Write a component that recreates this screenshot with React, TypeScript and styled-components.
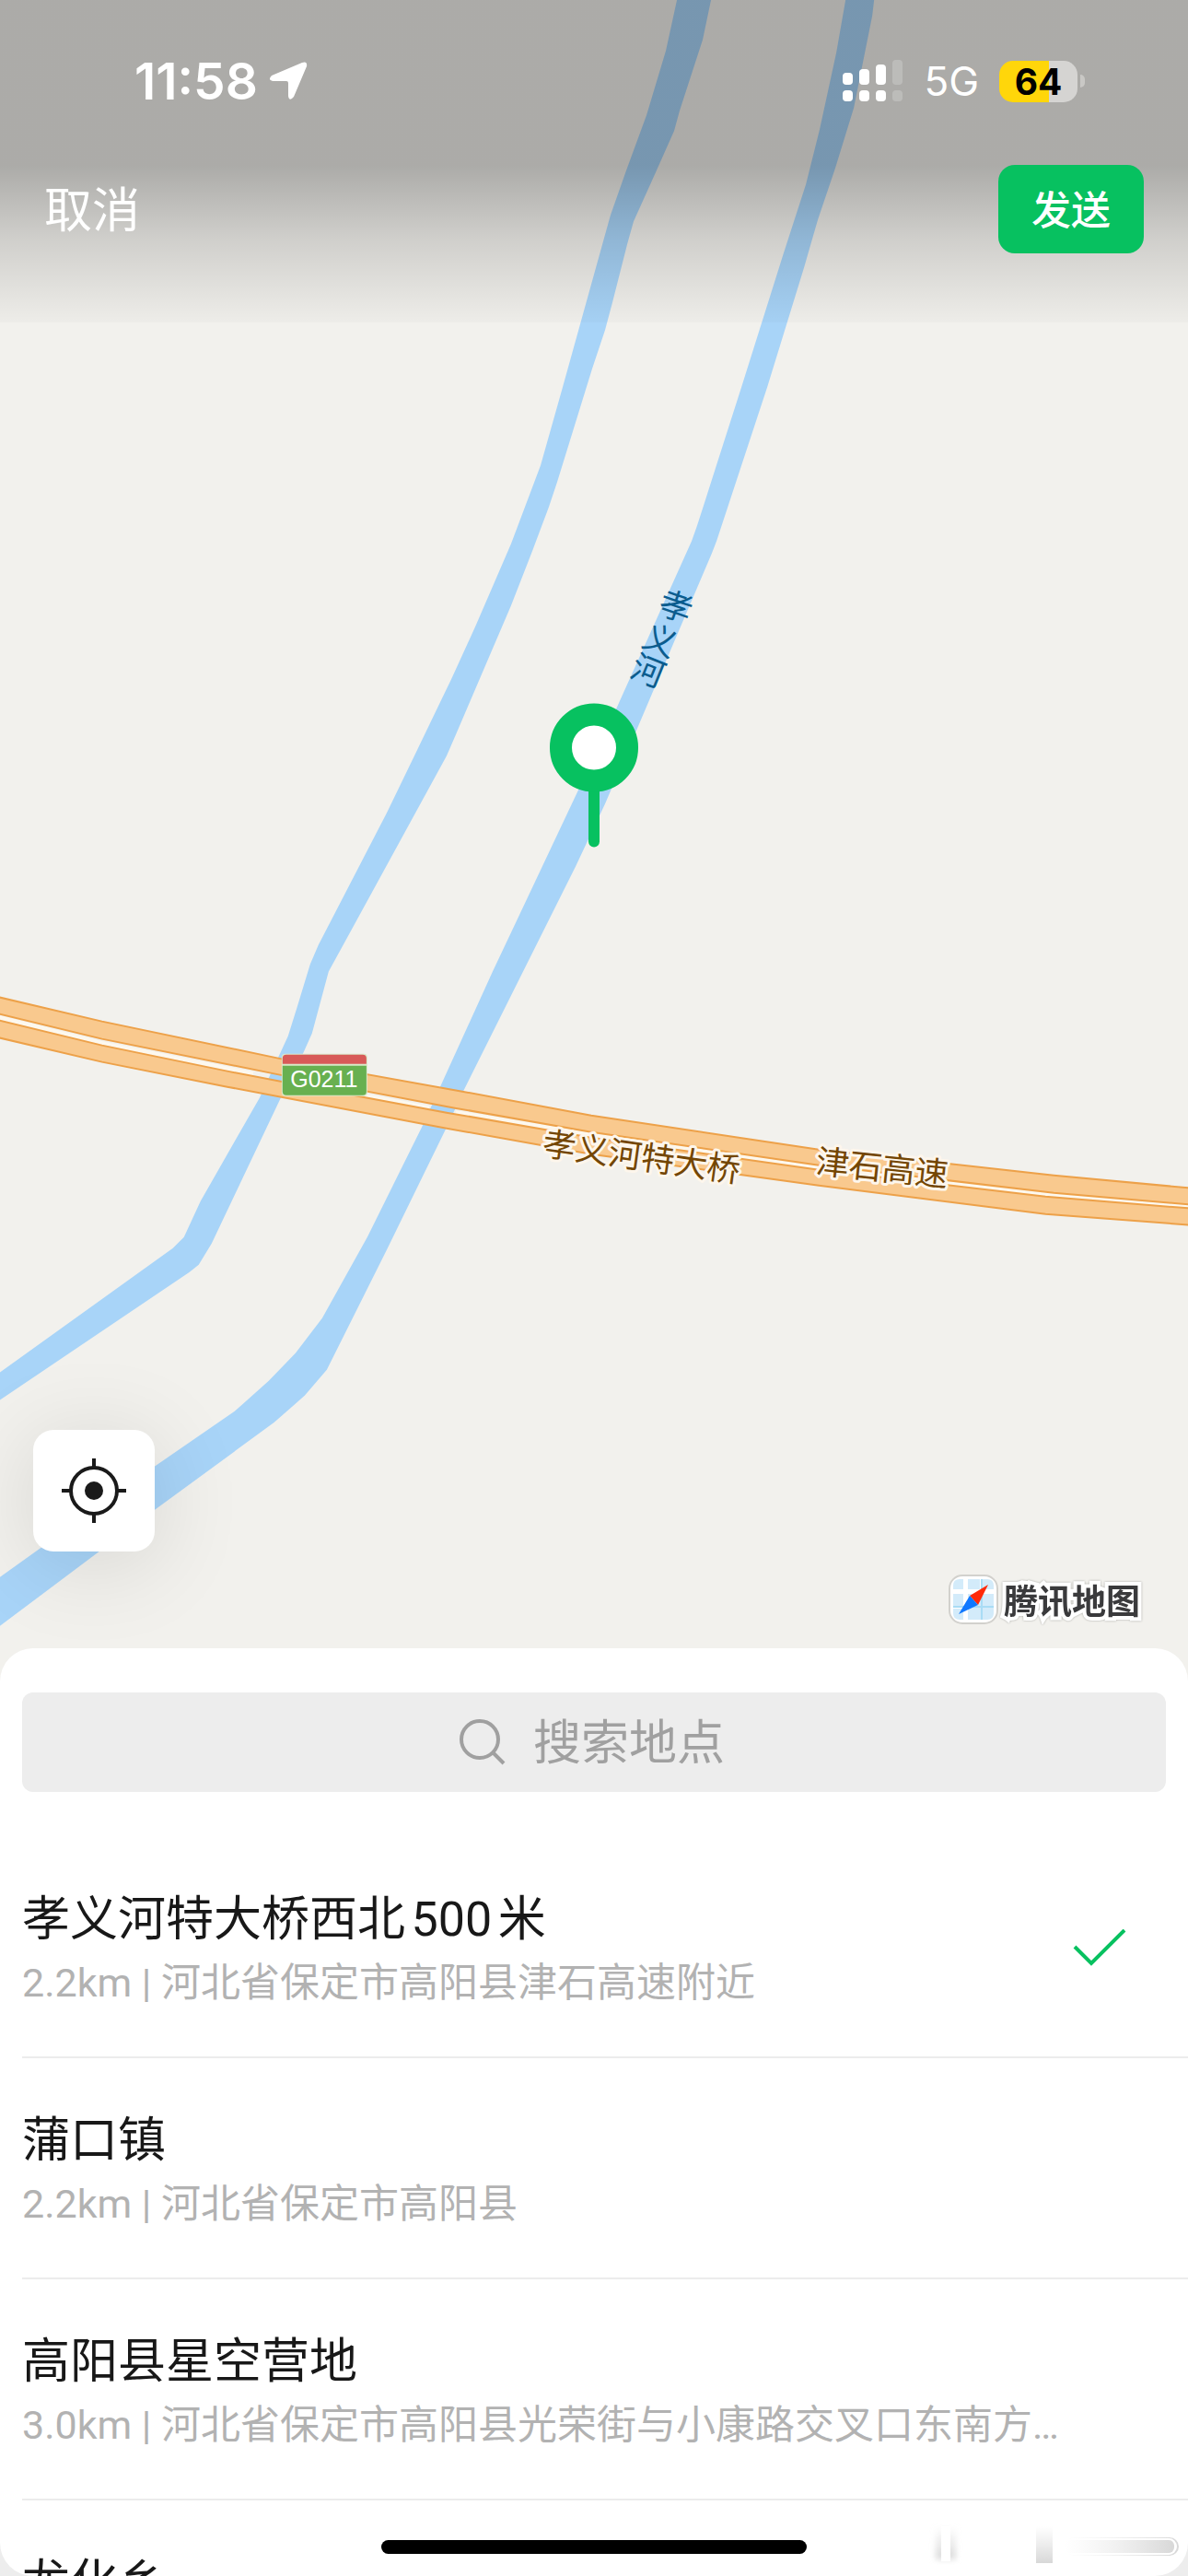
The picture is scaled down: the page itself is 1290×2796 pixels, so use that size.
import React from 'react';
import styled, { createGlobalStyle } from 'styled-components';

const GlobalStyle = createGlobalStyle`
  * { box-sizing: border-box; }
  body {
    margin: 0;
    background: #ededed;
    font-family: Roboto, "Noto Sans CJK SC", sans-serif;
    -webkit-font-smoothing: antialiased;
  }
  button, input { font: inherit; border: 0; margin: 0; }
  h2, p, ul { margin: 0; padding: 0; }
`;

const Screen = styled.main`
  position: relative;
  display: flex;
  flex-direction: column;
  height: 100vh;
  overflow: hidden;
`;

const MapArea = styled.section`
  position: relative;
  flex: none;
  display: flex;
  flex-direction: column;
  justify-content: space-between;
  height: calc(round(down, 64vh, 1px) + 36px);
  background: #f2f1ed;
`;

const MapDrawing = styled.svg`
  position: absolute;
  inset: 0;
  width: 100%;
  height: 100%;
`;

const MapLabel = styled.text<{ $tone: 'road' | 'water' }>`
  font-family: "Noto Sans CJK SC", sans-serif;
  font-size: 36px;
  font-weight: 400;
  text-anchor: middle;
  dominant-baseline: central;
  fill: ${p => (p.$tone === 'road' ? '#744603' : '#0b5c8e')};
  stroke: ${p => (p.$tone === 'road' ? '#fdf6ec' : 'none')};
  stroke-width: 6px;
  stroke-linejoin: round;
  paint-order: stroke;
`;

const RouteNumber = styled.text`
  font-family: "Liberation Sans", Arial, sans-serif;
  font-size: 25px;
  text-anchor: middle;
  fill: #ffffff;
`;

const Header = styled.header`
  position: relative;
  height: 350px;
  padding-top: 60px;
  background: linear-gradient(
    to bottom,
    rgba(0, 0, 0, 0.29) 0,
    rgba(0, 0, 0, 0.29) 180px,
    rgba(0, 0, 0, 0.14) 260px,
    rgba(0, 0, 0, 0.04) 335px,
    rgba(0, 0, 0, 0.02) 350px
  );
`;

const StatusBar = styled.div`
  display: flex;
  align-items: center;
  justify-content: space-between;
  height: 56px;
  padding: 0 112px 0 146px;
  color: #ffffff;
  font-family: Inter, sans-serif;
`;

const StatusGroup = styled.div<{ $gap: number }>`
  display: flex;
  align-items: center;
  gap: ${p => p.$gap}px;
`;

const Clock = styled.time`
  font-size: 55px;
  font-weight: 600;
  line-height: 56px;
`;

const Network = styled.span`
  font-size: 44px;
  line-height: 56px;
`;

const Battery = styled.div`
  display: flex;
  align-items: center;
  gap: 3px;
`;

const BatteryBody = styled.div<{ $level: number }>`
  width: 85px;
  height: 45px;
  border-radius: 15px;
  background: linear-gradient(to right, #ffd60a ${p => p.$level}%, #d5d4d2 ${p => p.$level}%);
  color: #000000;
  font-size: 39px;
  font-weight: 700;
  line-height: 45px;
  text-align: center;
`;

const BatteryTip = styled.div`
  width: 5px;
  height: 14px;
  border-radius: 0 7px 7px 0;
  background: #c9c8c5;
`;

const NavBar = styled.nav`
  display: flex;
  align-items: center;
  justify-content: space-between;
  margin-top: 63px;
  padding: 0 48px;
`;

const CancelButton = styled.button`
  padding: 6px 0 0;
  background: none;
  color: #ffffff;
  font-size: 52px;
  line-height: 68px;
`;

const SendButton = styled.button`
  height: 96px;
  padding: 0 36px 4px;
  border-radius: 18px;
  background: #07c160;
  color: #ffffff;
  font-size: 43px;
  font-weight: 500;
`;

const MapFooter = styled.div`
  position: relative;
  display: flex;
  align-items: flex-end;
  justify-content: space-between;
  padding: 0 52px 62px 36px;
`;

const LocateButton = styled.button`
  display: grid;
  place-items: center;
  width: 132px;
  height: 132px;
  margin-bottom: 79px;
  padding: 0;
  border-radius: 22px;
  background: #ffffff;
  box-shadow: 0 12px 100px rgba(0, 0, 0, 0.12);
`;

const Brand = styled.div`
  display: flex;
  align-items: center;
  gap: 6px;
`;

const BrandName = styled.span`
  color: #3a3a3c;
  font-family: "Noto Sans CJK SC", sans-serif;
  font-size: 37px;
  font-weight: 700;
  line-height: 52px;
  -webkit-text-stroke: 8px #ffffff;
  paint-order: stroke fill;
  filter: drop-shadow(0 0 1px #a8a8a4);
`;

const Sheet = styled.section`
  position: relative;
  flex: 1;
  min-height: 0;
  margin-top: -36px;
  padding-top: 48px;
  border-radius: 36px;
  background: #ffffff;
  overflow: hidden;
`;

const SearchBox = styled.label`
  display: flex;
  align-items: center;
  justify-content: center;
  gap: 30px;
  height: 108px;
  margin: 0 24px 49px;
  padding-right: 4px;
  border-radius: 12px;
  background: #ededed;
`;

const SearchInput = styled.input`
  width: 4em;
  padding: 4px 0 0;
  background: none;
  outline: none;
  color: #1a1a1a;
  font-size: 52px;
  line-height: 68px;
  &::placeholder { color: #a0a0a0; opacity: 1; }
`;

const PlaceList = styled.ul`
  list-style: none;
  padding-left: 24px;
`;

const PlaceRow = styled.li`
  border-bottom: 2px solid #ececec;
`;

const PlaceButton = styled.button`
  display: flex;
  align-items: center;
  justify-content: space-between;
  width: 100%;
  padding: 53px 66px 49px 0;
  background: none;
  text-align: left;
`;

const PlaceText = styled.div`
  min-width: 0;
`;

const PlaceName = styled.h2`
  color: #181818;
  font-size: 52px;
  font-weight: 400;
  line-height: 74px;
  text-autospace: normal;
`;

const PlaceDetail = styled.p`
  color: #b2b2b2;
  font-size: 43px;
  line-height: 62px;
  white-space: nowrap;
`;

const HomeIndicator = styled.div`
  position: absolute;
  left: 50%;
  bottom: 24px;
  width: 462px;
  height: 15px;
  border-radius: 8px;
  background: #000000;
  transform: translateX(-50%);
`;

const Smudge = styled.svg`
  position: absolute;
  right: 0;
  bottom: 12px;
`;

const places = [
  { name: '孝义河特大桥西北500米', detail: '2.2km | 河北省保定市高阳县津石高速附近', selected: true },
  { name: '蒲口镇', detail: '2.2km | 河北省保定市高阳县' },
  { name: '高阳县星空营地', detail: '3.0km | 河北省保定市高阳县光荣街与小康路交叉口东南方…' },
  { name: '龙化乡' },
];

const riverLabel = [
  { char: '孝', x: 735, y: 655, angle: 19 },
  { char: '义', x: 718, y: 692, angle: 22 },
  { char: '河', x: 705, y: 725, angle: 22 },
];

function MapCanvas() {
  return (
    <MapDrawing viewBox="0 0 1290 1824" preserveAspectRatio="xMidYMin slice">
      <g fill="#a8d4f8">
        <path d="M735 0L723 55L702 125L680 185L663 233L611 420L587 505L555 590L517 678L490 737L450 820L420 882L346 1025L337 1046L323 1092L313 1124L282 1191L218 1303L200 1342L188 1354L0 1489V1519L206 1380L216 1372L230 1349L305 1191L330 1141L339 1121L357 1054L485 820L495 797L555 657L578 598L596 550L605 523L643 400L657 358L665 328L681 265L688 240L712 187L732 142L738 120L763 43L772 0Z" />
        <path d="M918 0L908 57L890 140L875 200L850 277L805 420L757 570L751 587L670 767L628 857L535 1054L458 1223L399 1342L350 1430L321 1468L292 1498L255 1531L168 1591L0 1711V1764L168 1638L298 1543L331 1514L355 1486L420 1356L485 1223L503 1184L625 940L657 872L692 790L773 600L778 587L833 420L873 290L888 238L907 182L927 117L935 77L947 17L949 0Z" />
      </g>
      <path
        d="M0 1104L111 1132L275 1165M328 1176L466 1202M495 1207L642 1231L889 1267L1139 1296L1290 1309"
        fill="none"
        stroke="#fdf8ee"
        strokeWidth="5"
      />
      <g fill="#f9c98e" stroke="#eda149" strokeWidth="2">
        <path d="M-4 1081L111 1108L307 1149L502 1184L642 1210L889 1247L1144 1275L1294 1289V1307L1144 1294L889 1264L642 1228L494 1202L304 1166L111 1127L-4 1099Z" />
        <path d="M-4 1106L111 1134L247 1162L362 1184L485 1207L642 1234L889 1269L1135 1298L1294 1311V1329L1135 1317L889 1286L642 1252L485 1224L247 1179L111 1152L-4 1125Z" />
      </g>
      <rect x="306" y="1143" width="93" height="46" rx="4" fill="#d9e8c8" />
      <path d="M307 1154V1148a4 4 0 0 1 4-4H394a4 4 0 0 1 4 4V1154Z" fill="#d85a58" />
      <path d="M307 1156H398V1184a4 4 0 0 1-4 4H311a4 4 0 0 1-4-4Z" fill="#68b050" />
      <RouteNumber x="352" y="1179">G0211</RouteNumber>
      <MapLabel $tone="road" transform="translate(697 1252) rotate(8)">孝义河特大桥</MapLabel>
      <MapLabel $tone="road" transform="translate(958 1264) rotate(6)">津石高速</MapLabel>
      {riverLabel.map(l => (
        <MapLabel key={l.char} $tone="water" transform={`translate(${l.x} ${l.y}) rotate(${l.angle})`}>
          {l.char}
        </MapLabel>
      ))}
      <rect x="639" y="840" width="12" height="79" rx="6" fill="#07c160" />
      <circle cx="645" cy="811" r="36" fill="#ffffff" stroke="#07c160" strokeWidth="24" />
    </MapDrawing>
  );
}

function SignalIcon() {
  const tops = [14, 10, 5, 0];
  return (
    <svg width="66" height="46" viewBox="0 0 66 46" aria-hidden="true">
      {tops.map((top, i) => (
        <g key={top} fill="#ffffff" opacity={i === 3 ? 0.2 : 1}>
          <rect x={i * 18} y={top} width="11" height={27 - top} rx="4" />
          <rect x={i * 18} y="33" width="11" height="12" rx="4" />
        </g>
      ))}
    </svg>
  );
}

function BrandIcon() {
  return (
    <svg width="54" height="54" viewBox="0 0 54 54" aria-hidden="true">
      <rect x="1" y="1" width="52" height="52" rx="14" fill="#ffffff" stroke="#d2d1cd" strokeWidth="2" />
      <path d="M5 16V12q0-7 7-7h4v11zM21 5h13v11H21zM37 5h5q7 0 7 7v4H37zM5 21h11v13H5zM21 21h28v21q0 7-7 7H21zM5 37h11v12h-4q-7 0-7-7z" fill="#d3ebfa" />
      <path d="M36 5V49M5 35H49" stroke="#a9dcf5" strokeWidth="2" />
      <path d="M43 11L23 23L32 33Z" fill="#ff2a0a" />
      <path d="M11 43L23 23L32 33Z" fill="#0f78ff" />
    </svg>
  );
}

export default function App() {
  return (
    <Screen>
      <GlobalStyle />
      <MapArea>
        <MapCanvas />
        <Header>
          <StatusBar>
            <StatusGroup $gap={12}>
              <Clock>11:58</Clock>
              <svg width="42" height="42" viewBox="0 0 42 42" aria-hidden="true">
                <path d="M36 1Q42 -1 41 5L27 38Q22 44 21 37V23Q21 21 19 21H5Q-2 20 3 15Z" fill="#ffffff" />
              </svg>
            </StatusGroup>
            <StatusGroup $gap={22}>
              <SignalIcon />
              <Network>5G</Network>
              <Battery>
                <BatteryBody $level={64}>64</BatteryBody>
                <BatteryTip />
              </Battery>
            </StatusGroup>
          </StatusBar>
          <NavBar>
            <CancelButton type="button">取消</CancelButton>
            <SendButton type="button">发送</SendButton>
          </NavBar>
        </Header>
        <MapFooter>
          <LocateButton type="button" aria-label="定位">
            <svg width="72" height="72" viewBox="0 0 72 72" aria-hidden="true">
              <circle cx="36" cy="36" r="25" fill="none" stroke="#1a1a1a" strokeWidth="4" />
              <circle cx="36" cy="36" r="10" fill="#1a1a1a" />
              <path d="M36 1V10M36 62V71M1 36H10M62 36H71" stroke="#1a1a1a" strokeWidth="4" />
            </svg>
          </LocateButton>
          <Brand>
            <BrandIcon />
            <BrandName>腾讯地图</BrandName>
          </Brand>
        </MapFooter>
      </MapArea>
      <Sheet>
        <SearchBox>
          <svg width="50" height="50" viewBox="0 0 50 50" fill="none" stroke="#a0a0a0" strokeWidth="4" aria-hidden="true">
            <circle cx="22" cy="22" r="20" />
            <path d="M36 36L48 48" />
          </svg>
          <SearchInput type="text" placeholder="搜索地点" aria-label="搜索地点" />
        </SearchBox>
        <PlaceList>
          {places.map(place => (
            <PlaceRow key={place.name}>
              <PlaceButton type="button">
                <PlaceText>
                  <PlaceName>{place.name}</PlaceName>
                  {place.detail && <PlaceDetail>{place.detail}</PlaceDetail>}
                </PlaceText>
                {place.selected && (
                  <svg width="60" height="42" viewBox="0 0 60 42" fill="none" aria-hidden="true">
                    <path d="M3 19L21 37L57 1" stroke="#07c160" strokeWidth="4" />
                  </svg>
                )}
              </PlaceButton>
            </PlaceRow>
          ))}
        </PlaceList>
      </Sheet>
      <HomeIndicator />
      <Smudge width="284" height="46" viewBox="0 0 284 46" aria-hidden="true">
        <defs>
          <linearGradient id="fadeDown" x1="0" y1="0" x2="0" y2="1">
            <stop offset="0" stopColor="#dcdcdc" stopOpacity="0" />
            <stop offset="1" stopColor="#d8d8d8" />
          </linearGradient>
          <linearGradient id="fadeRight" x1="0" y1="0" x2="1" y2="0">
            <stop offset="0" stopColor="#e8e8e8" stopOpacity="0" />
            <stop offset="1" stopColor="#d8d8d8" />
          </linearGradient>
          <filter id="soft" x="-50%" y="-20%" width="200%" height="140%">
            <feGaussianBlur stdDeviation="3" />
          </filter>
        </defs>
        <rect x="10" y="4" width="22" height="36" fill="url(#fadeDown)" filter="url(#soft)" />
        <rect x="16" y="4" width="10" height="38" fill="#ffffff" />
        <rect x="119" y="4" width="18" height="40" fill="url(#fadeDown)" />
        <rect x="150" y="16" width="124" height="20" rx="10" fill="url(#fadeRight)" />
        <rect x="150" y="17" width="122" height="18" rx="9" fill="#ffffff" />
        <rect x="150" y="19" width="119" height="14" rx="6" fill="url(#fadeRight)" />
      </Smudge>
    </Screen>
  );
}
